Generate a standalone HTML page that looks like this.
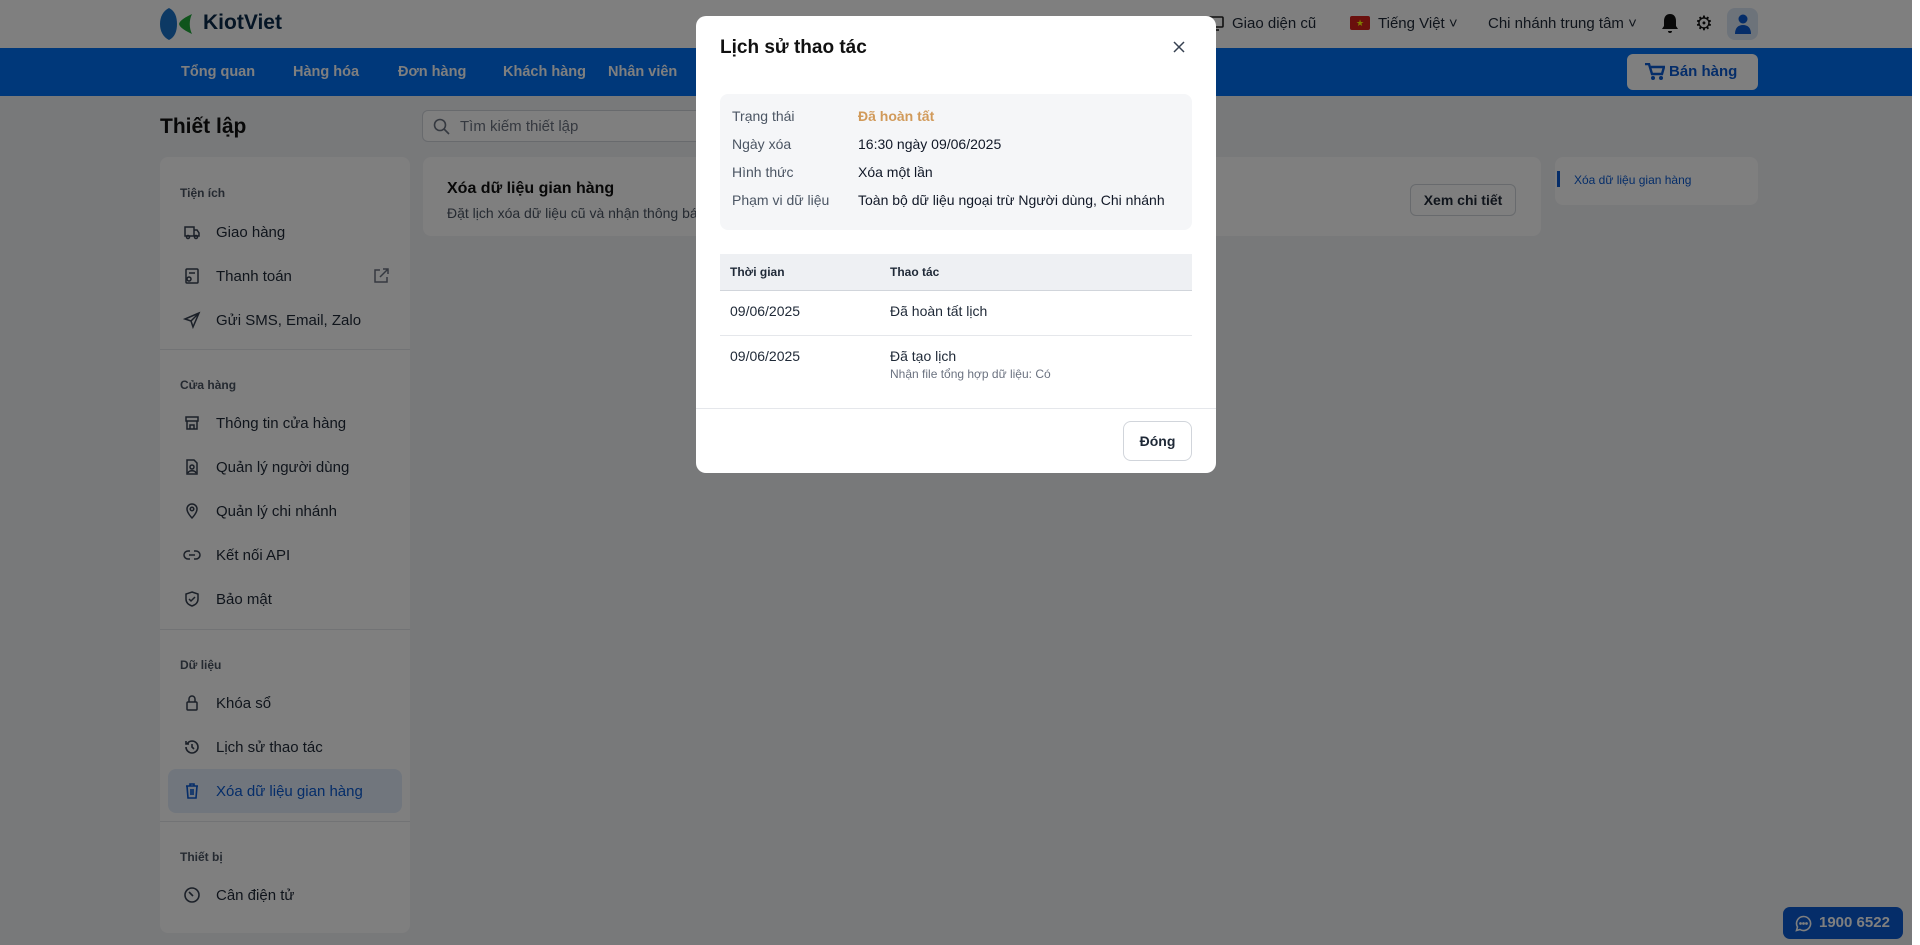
<!DOCTYPE html>
<html><head><meta charset="utf-8"><style>
*{box-sizing:border-box;margin:0;padding:0}
body{width:1920px;height:945px;overflow:hidden;background:#f0f2f5;font-family:"Liberation Sans",sans-serif;color:#1f2937;position:relative;font-size:14px}
.abs{position:absolute}
.top{left:0;top:0;width:1920px;height:48px;background:#fff}
.nav{left:0;top:48px;width:1920px;height:48px;background:#0070f4}
.nav span{position:absolute;top:16px;color:#fff;font-weight:bold;font-size:14.5px}
.side{left:160px;top:157px;width:250px;height:776px;background:#fff;border-radius:8px}
.sec{position:absolute;left:20px;font-size:12px;font-weight:bold;color:#4b5563}
.it{position:absolute;left:56px;font-size:15px;color:#1f2937;margin-top:2px}
.ic{position:absolute;left:23px;width:18px;height:18px}
.hr{position:absolute;left:0;width:250px;height:1px;background:#e5e7eb}
.ov{left:0;top:0;width:1912px;height:945px;background:rgba(0,0,0,.5)}
.modal{left:696px;top:16px;width:520px;height:457px;background:#fff;border-radius:10px}
.lab{position:absolute;left:36px;color:#4b5563;font-size:14px}
.val{position:absolute;left:162px;color:#111827;font-size:14px}
</style></head><body>
<div class="abs top"></div>
<svg class="abs" style="left:160px;top:8px" width="34" height="32" viewBox="0 0 34 32"><path d="M9 0C3 3 0 9 0 16s3 13 9 16c6-3 8-9 8-16S15 3 9 0z" fill="#1a73c8"/><path d="M32 6C26 9 20 12 19 16c1 4 7 7 13 10-3-6-3-14 0-20z" fill="#1ea838"/></svg>
<div class="abs" style="left:203px;top:11px;font-size:21px;font-weight:bold;color:#0b2a4a">KiotViet</div>
<svg class="abs" style="left:1207px;top:14px" width="18" height="18" viewBox="0 0 18 18"><rect x="2" y="3" width="14" height="10" rx="1" fill="none" stroke="#222" stroke-width="1.6"/><path d="M6 16h6" stroke="#222" stroke-width="1.6"/></svg>
<div class="abs" style="left:1232px;top:15px;font-size:15px">Giao diện cũ</div>
<div class="abs" style="left:1350px;top:16px;width:20px;height:14px;background:#d4201b;border-radius:2px;color:#ff0;font-size:9px;text-align:center;line-height:14px">★</div>
<div class="abs" style="left:1378px;top:15px;font-size:15px">Tiếng Việt ˅</div>
<div class="abs" style="left:1488px;top:15px;font-size:15px">Chi nhánh trung tâm ˅</div>
<svg class="abs" style="left:1661px;top:13px" width="18" height="22" viewBox="0 0 18 22"><path d="M9 1c-4 0-6 3-6 7v5l-2 3h16l-2-3V8c0-4-2-7-6-7z M7 18a2 2 0 004 0z" fill="#111"/></svg>
<div class="abs" style="left:1695px;top:11px;font-size:20px;color:#111">⚙</div>
<div class="abs" style="left:1727px;top:8px;width:31px;height:32px;border-radius:8px;background:#dbe6f5"></div>
<svg class="abs" style="left:1734px;top:14px" width="18" height="20" viewBox="0 0 18 20"><circle cx="9" cy="5" r="4.5" fill="#0a5ad2"/><path d="M1 20c0-6 3-9 8-9s8 3 8 9z" fill="#0a5ad2"/></svg>
<div class="abs nav"><span style="left:181px">Tổng quan</span><span style="left:293px">Hàng hóa</span><span style="left:398px">Đơn hàng</span><span style="left:503px">Khách hàng</span><span style="left:608px">Nhân viên</span>
<div style="position:absolute;left:1627px;top:6px;width:131px;height:36px;background:#fff;border-radius:6px;color:#0a5ad2;font-weight:bold;font-size:15px;padding:9px 0 0 42px">Bán hàng<svg style="position:absolute;left:18px;top:9px" width="20" height="18" viewBox="0 0 20 18"><path d="M0 1h4l3 10h10l2-7H6" fill="none" stroke="#0a5ad2" stroke-width="2.4"/><circle cx="8" cy="15" r="2" fill="#0a5ad2"/><circle cx="16" cy="15" r="2" fill="#0a5ad2"/></svg></div></div>
<div class="abs" style="left:160px;top:115px;font-size:21px;font-weight:bold;color:#111">Thiết lập</div>
<div class="abs" style="left:422px;top:110px;width:300px;height:32px;background:#fff;border:1px solid #d1d5db;border-radius:6px;color:#6b7280;font-size:15px;padding:7px 0 0 37px">Tìm kiếm thiết lập<svg style="position:absolute;left:10px;top:7px" width="17" height="17" viewBox="0 0 17 17"><circle cx="7" cy="7" r="5.5" fill="none" stroke="#6b7280" stroke-width="1.6"/><path d="M11 11l5 5" stroke="#6b7280" stroke-width="1.6"/></svg></div>
<div class="abs" style="left:423px;top:157px;width:1118px;height:79px;background:#fff;border-radius:8px">
<div style="position:absolute;left:24px;top:23px;font-size:16px;font-weight:bold;color:#111">Xóa dữ liệu gian hàng</div>
<div style="position:absolute;left:24px;top:48px;font-size:14px;color:#4b5563">Đặt lịch xóa dữ liệu cũ và nhận thông báo</div>
<div style="position:absolute;left:987px;top:27px;width:106px;height:32px;border:1px solid #d1d5db;border-radius:6px;font-weight:bold;font-size:14px;text-align:center;line-height:30px">Xem chi tiết</div></div>
<div class="abs" style="left:1555px;top:157px;width:203px;height:48px;background:#fff;border-radius:8px"><div style="position:absolute;left:2px;top:14px;width:3px;height:16px;background:#0a5ad2"></div><div style="position:absolute;left:19px;top:16px;font-size:12px;color:#0a5ad2">Xóa dữ liệu gian hàng</div></div>
<div class="abs side">
<div class="sec" style="top:29px">Tiện ích</div>
<svg class="ic" style="top:66px" viewBox="0 0 18 18" fill="none" stroke="#374151" stroke-width="1.5"><path d="M2 4h9v9H2zM11 7h3l2 3v3h-5"/><circle cx="5" cy="14" r="1.5"/><circle cx="13" cy="14" r="1.5"/></svg><div class="it" style="top:65px">Giao hàng</div>
<svg class="ic" style="top:110px" viewBox="0 0 18 18" fill="none" stroke="#374151" stroke-width="1.5"><rect x="3" y="2" width="12" height="14" rx="1"/><path d="M6 6h6"/><circle cx="6" cy="12" r="2"/></svg><div class="it" style="top:109px">Thanh toán</div>
<svg class="abs" style="left:212px;top:110px" width="18" height="18" viewBox="0 0 18 18" fill="none" stroke="#6b7280" stroke-width="1.5"><path d="M8 3H3v12h12v-5M11 2h5v5M16 2l-8 8"/></svg>
<svg class="ic" style="top:154px" viewBox="0 0 18 18" fill="none" stroke="#374151" stroke-width="1.5"><path d="M16 2L2 8l6 2 2 6zM8 10l8-8"/></svg><div class="it" style="top:153px">Gửi SMS, Email, Zalo</div>
<div class="hr" style="top:192px"></div>
<div class="sec" style="top:221px">Cửa hàng</div>
<svg class="ic" style="top:257px" viewBox="0 0 18 18" fill="none" stroke="#374151" stroke-width="1.5"><path d="M3 3h12v4H3zM4 7v8h10V7M7 15v-4h4v4"/></svg><div class="it" style="top:256px">Thông tin cửa hàng</div>
<svg class="ic" style="top:301px" viewBox="0 0 18 18" fill="none" stroke="#374151" stroke-width="1.5"><path d="M4 2h7l3 3v11H4z"/><circle cx="9" cy="9" r="2"/><path d="M5 15c1-3 7-3 8 0"/></svg><div class="it" style="top:300px">Quản lý người dùng</div>
<svg class="ic" style="top:345px" viewBox="0 0 18 18" fill="none" stroke="#374151" stroke-width="1.5"><path d="M9 16s5-5 5-9a5 5 0 00-10 0c0 4 5 9 5 9z"/><circle cx="9" cy="7" r="1.8"/></svg><div class="it" style="top:344px">Quản lý chi nhánh</div>
<svg class="ic" style="top:389px" viewBox="0 0 18 18" fill="none" stroke="#374151" stroke-width="1.5"><path d="M7 5H5a4 4 0 000 8h2M11 5h2a4 4 0 010 8h-2M6 9h6"/></svg><div class="it" style="top:388px">Kết nối API</div>
<svg class="ic" style="top:433px" viewBox="0 0 18 18" fill="none" stroke="#374151" stroke-width="1.5"><path d="M9 2l6 2v5c0 4-3 6-6 7-3-1-6-3-6-7V4zM6 9l2 2 4-4"/></svg><div class="it" style="top:432px">Bảo mật</div>
<div class="hr" style="top:472px"></div>
<div class="sec" style="top:501px">Dữ liệu</div>
<svg class="ic" style="top:537px" viewBox="0 0 18 18" fill="none" stroke="#374151" stroke-width="1.5"><rect x="4" y="8" width="10" height="8" rx="1"/><path d="M6 8V5a3 3 0 016 0v3"/></svg><div class="it" style="top:536px">Khóa sổ</div>
<svg class="ic" style="top:581px" viewBox="0 0 18 18" fill="none" stroke="#374151" stroke-width="1.6"><path d="M3 9a6 6 0 106-6 6 6 0 00-5 3M3 3v3h3M9 6v3l2 2"/></svg><div class="it" style="top:580px">Lịch sử thao tác</div>
<div style="position:absolute;left:8px;top:612px;width:234px;height:44px;background:#e2ecfb;border-radius:8px"></div>
<svg class="ic" style="top:625px" viewBox="0 0 18 18" fill="none" stroke="#0a5ad2" stroke-width="1.6"><path d="M3 4h12M7 4V2h4v2M4 4l1 12h8l1-12M8 7v6M10 7v6"/></svg><div class="it" style="top:624px;color:#0a5ad2">Xóa dữ liệu gian hàng</div>
<div class="hr" style="top:664px"></div>
<div class="sec" style="top:693px">Thiết bị</div>
<svg class="ic" style="top:729px" viewBox="0 0 18 18" fill="none" stroke="#374151" stroke-width="1.6"><circle cx="9" cy="9" r="7"/><path d="M6 6l4 4"/></svg><div class="it" style="top:728px">Cân điện tử</div>
</div>
<div class="abs" style="left:1783px;top:907px;width:120px;height:32px;background:#0a5ad2;border-radius:7px;color:#fff;font-weight:bold;font-size:15px;padding:7px 0 0 36px">1900 6522<svg style="position:absolute;left:12px;top:8px" width="17" height="17" viewBox="0 0 17 17" fill="none" stroke="#fff" stroke-width="1.6"><path d="M8.5 1.5a7 7 0 00-6 10.5L1.5 15.5 5 14.5a7 7 0 103.5-13z"/><circle cx="5.5" cy="8.5" r=".6" fill="#fff"/><circle cx="8.5" cy="8.5" r=".6" fill="#fff"/><circle cx="11.5" cy="8.5" r=".6" fill="#fff"/></svg></div>
<div class="abs ov"></div>
<div class="abs modal">
<div style="position:absolute;left:24px;top:21px;font-size:19px;font-weight:bold;color:#111">Lịch sử thao tác</div>
<svg style="position:absolute;left:477px;top:25px" width="12" height="12" viewBox="0 0 12 12" stroke="#374151" stroke-width="1.5"><path d="M1 1l10 10M11 1L1 11"/></svg>
<div style="position:absolute;left:24px;top:78px;width:472px;height:136px;background:#f5f6f8;border-radius:8px">
<div class="lab" style="top:14px;left:12px">Trạng thái</div><div class="val" style="top:14px;left:138px;color:#d19a5a;font-weight:bold">Đã hoàn tất</div>
<div class="lab" style="top:42px;left:12px">Ngày xóa</div><div class="val" style="top:42px;left:138px">16:30 ngày 09/06/2025</div>
<div class="lab" style="top:70px;left:12px">Hình thức</div><div class="val" style="top:70px;left:138px">Xóa một lần</div>
<div class="lab" style="top:98px;left:12px">Phạm vi dữ liệu</div><div class="val" style="top:98px;left:138px">Toàn bộ dữ liệu ngoại trừ Người dùng, Chi nhánh</div>
</div>
<div style="position:absolute;left:24px;top:238px;width:472px;height:37px;background:#eef0f3;border-bottom:1px solid #d1d5db">
<div style="position:absolute;left:10px;top:11px;font-size:12px;font-weight:bold">Thời gian</div><div style="position:absolute;left:170px;top:11px;font-size:12px;font-weight:bold">Thao tác</div></div>
<div style="position:absolute;left:34px;top:287px;font-size:14px">09/06/2025</div><div style="position:absolute;left:194px;top:287px;font-size:14px">Đã hoàn tất lịch</div>
<div style="position:absolute;left:24px;top:319px;width:472px;height:1px;background:#e5e7eb"></div>
<div style="position:absolute;left:34px;top:332px;font-size:14px">09/06/2025</div><div style="position:absolute;left:194px;top:332px;font-size:14px">Đã tạo lịch</div>
<div style="position:absolute;left:194px;top:351px;font-size:12px;color:#6b7280">Nhận file tổng hợp dữ liệu: Có</div>
<div style="position:absolute;left:0;top:392px;width:520px;height:1px;background:#e5e7eb"></div>
<div style="position:absolute;left:427px;top:405px;width:69px;height:40px;border:1px solid #d1d5db;border-radius:8px;text-align:center;line-height:38px;font-weight:bold;font-size:14px">Đóng</div>
</div>
<div class="abs" style="left:1912px;top:0;width:8px;height:945px;background:#fff"></div>
</body></html>
